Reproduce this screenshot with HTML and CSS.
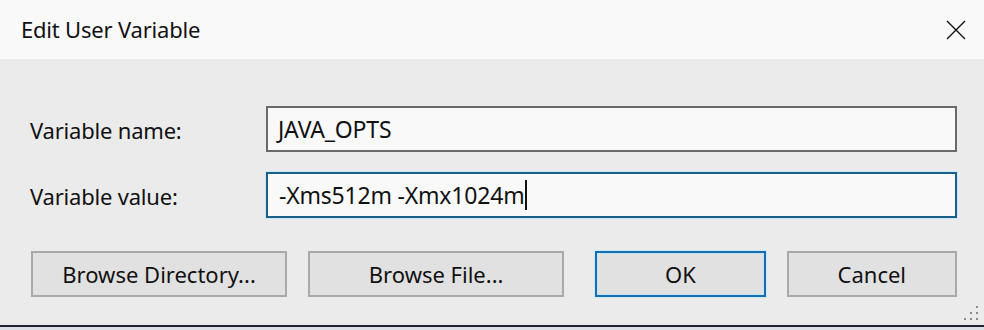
FILE: index.html
```html
<!DOCTYPE html>
<html lang="en">
<head>
  <meta charset="UTF-8" />
  <title>Edit User Variable</title>
  <link rel="stylesheet" href="styles.css">
</head>
<body>

<div class="dialogo">
  <!-- Barra de título -->
  <header class="barra-titulo">
    <span class="titulo">Edit User Variable</span>
    <svg class="cerrar" width="20" height="20" viewBox="0 0 20 20">
      <path d="M1 1 L19 19 M19 1 L1 19" stroke="#111" stroke-width="1.4" fill="none" />
    </svg>
  </header>

  <!-- Contenido -->
  <main class="contenido">
    <div class="formulario">
      <label class="etiqueta">Variable name:</label>
      <div class="campo">JAVA_OPTS</div>

      <label class="etiqueta">Variable value:</label>
      <div class="campo activo">-Xms512m -Xmx1024m<span class="cursor"></span></div>
    </div>

    <div class="botones">
      <button class="boton ancho">Browse Directory...</button>
      <button class="boton ancho">Browse File...</button>
      <button class="boton corto principal">OK</button>
      <button class="boton corto">Cancel</button>
    </div>

    <svg class="agarre" width="16" height="16" viewBox="0 0 16 16">
      <rect x="13" y="1" width="2" height="2" fill="#8a8a8a" />
      <rect x="7" y="7" width="2" height="2" fill="#8a8a8a" />
      <rect x="13" y="7" width="2" height="2" fill="#8a8a8a" />
      <rect x="1" y="13" width="2" height="2" fill="#8a8a8a" />
      <rect x="7" y="13" width="2" height="2" fill="#8a8a8a" />
      <rect x="13" y="13" width="2" height="2" fill="#8a8a8a" />
    </svg>
  </main>

  <div class="fondo-inferior"></div>
</div>

</body>
</html>
```

FILE: styles.css
```css
body {
  margin: 0;
  padding: 0;
  font-family: 'Noto Sans', 'Open Sans', sans-serif;
  color: #111;
  background: #ebebeb;
}

.dialogo {
  width: 984px;
  height: 330px;
  display: flex;
  flex-direction: column;
  overflow: hidden;
}

.barra-titulo {
  height: 59px;
  flex-shrink: 0;
  background: #f9f9f9;
  display: flex;
  align-items: center;
  justify-content: space-between;
  padding: 0 18px 0 21px;
}

.titulo {
  font-size: 22px;
  letter-spacing: -0.2px;
  line-height: 1;
  margin-top: -2px;
}

.cerrar {
  display: block;
}

.contenido {
  height: 266px;
  flex-shrink: 0;
  background: #ebebeb;
  box-sizing: border-box;
  padding: 47px 27px 0 30px;
  position: relative;
}

.formulario {
  display: grid;
  grid-template-columns: 236px 1fr;
  row-gap: 20px;
  align-items: center;
}

.etiqueta {
  font-size: 22px;
  letter-spacing: -0.2px;
  margin-top: 2px;
}

.campo {
  height: 46px;
  box-sizing: border-box;
  border: 2px solid #6a6a6a;
  background: #f9f9f9;
  font-size: 23px;
  letter-spacing: -0.2px;
  padding: 0 10px;
  display: flex;
  align-items: center;
}

.campo.activo {
  border-color: #1d5f88;
  box-shadow: 0 0 0 1px #c4e8f6;
  padding-left: 11px;
}

.cursor {
  display: inline-block;
  width: 2px;
  height: 30px;
  background: #111;
  margin-left: 1px;
}

.botones {
  display: flex;
  gap: 21px;
  margin-top: 33px;
  margin-left: 1px;
}

.boton {
  height: 46px;
  box-sizing: border-box;
  background: #e1e1e1;
  border: 2px solid #a9a9a9;
  font-family: 'Noto Sans', 'Open Sans', sans-serif;
  font-size: 22px;
  color: #111;
  padding: 0;
}

.boton.ancho {
  width: 257px;
}

.boton.corto {
  width: 171px;
}

.boton.principal {
  margin-left: 10px;
  border-color: #1a6cb0;
  box-shadow: inset 0 0 0 1px #bfe6f7, 0 0 0 1px #c8ebf8;
}

.agarre {
  position: absolute;
  right: 5px;
  bottom: 4px;
}

.fondo-inferior {
  flex: 1;
  border-top: 2px solid #23232d;
  background: #dde1e6;
}
```
